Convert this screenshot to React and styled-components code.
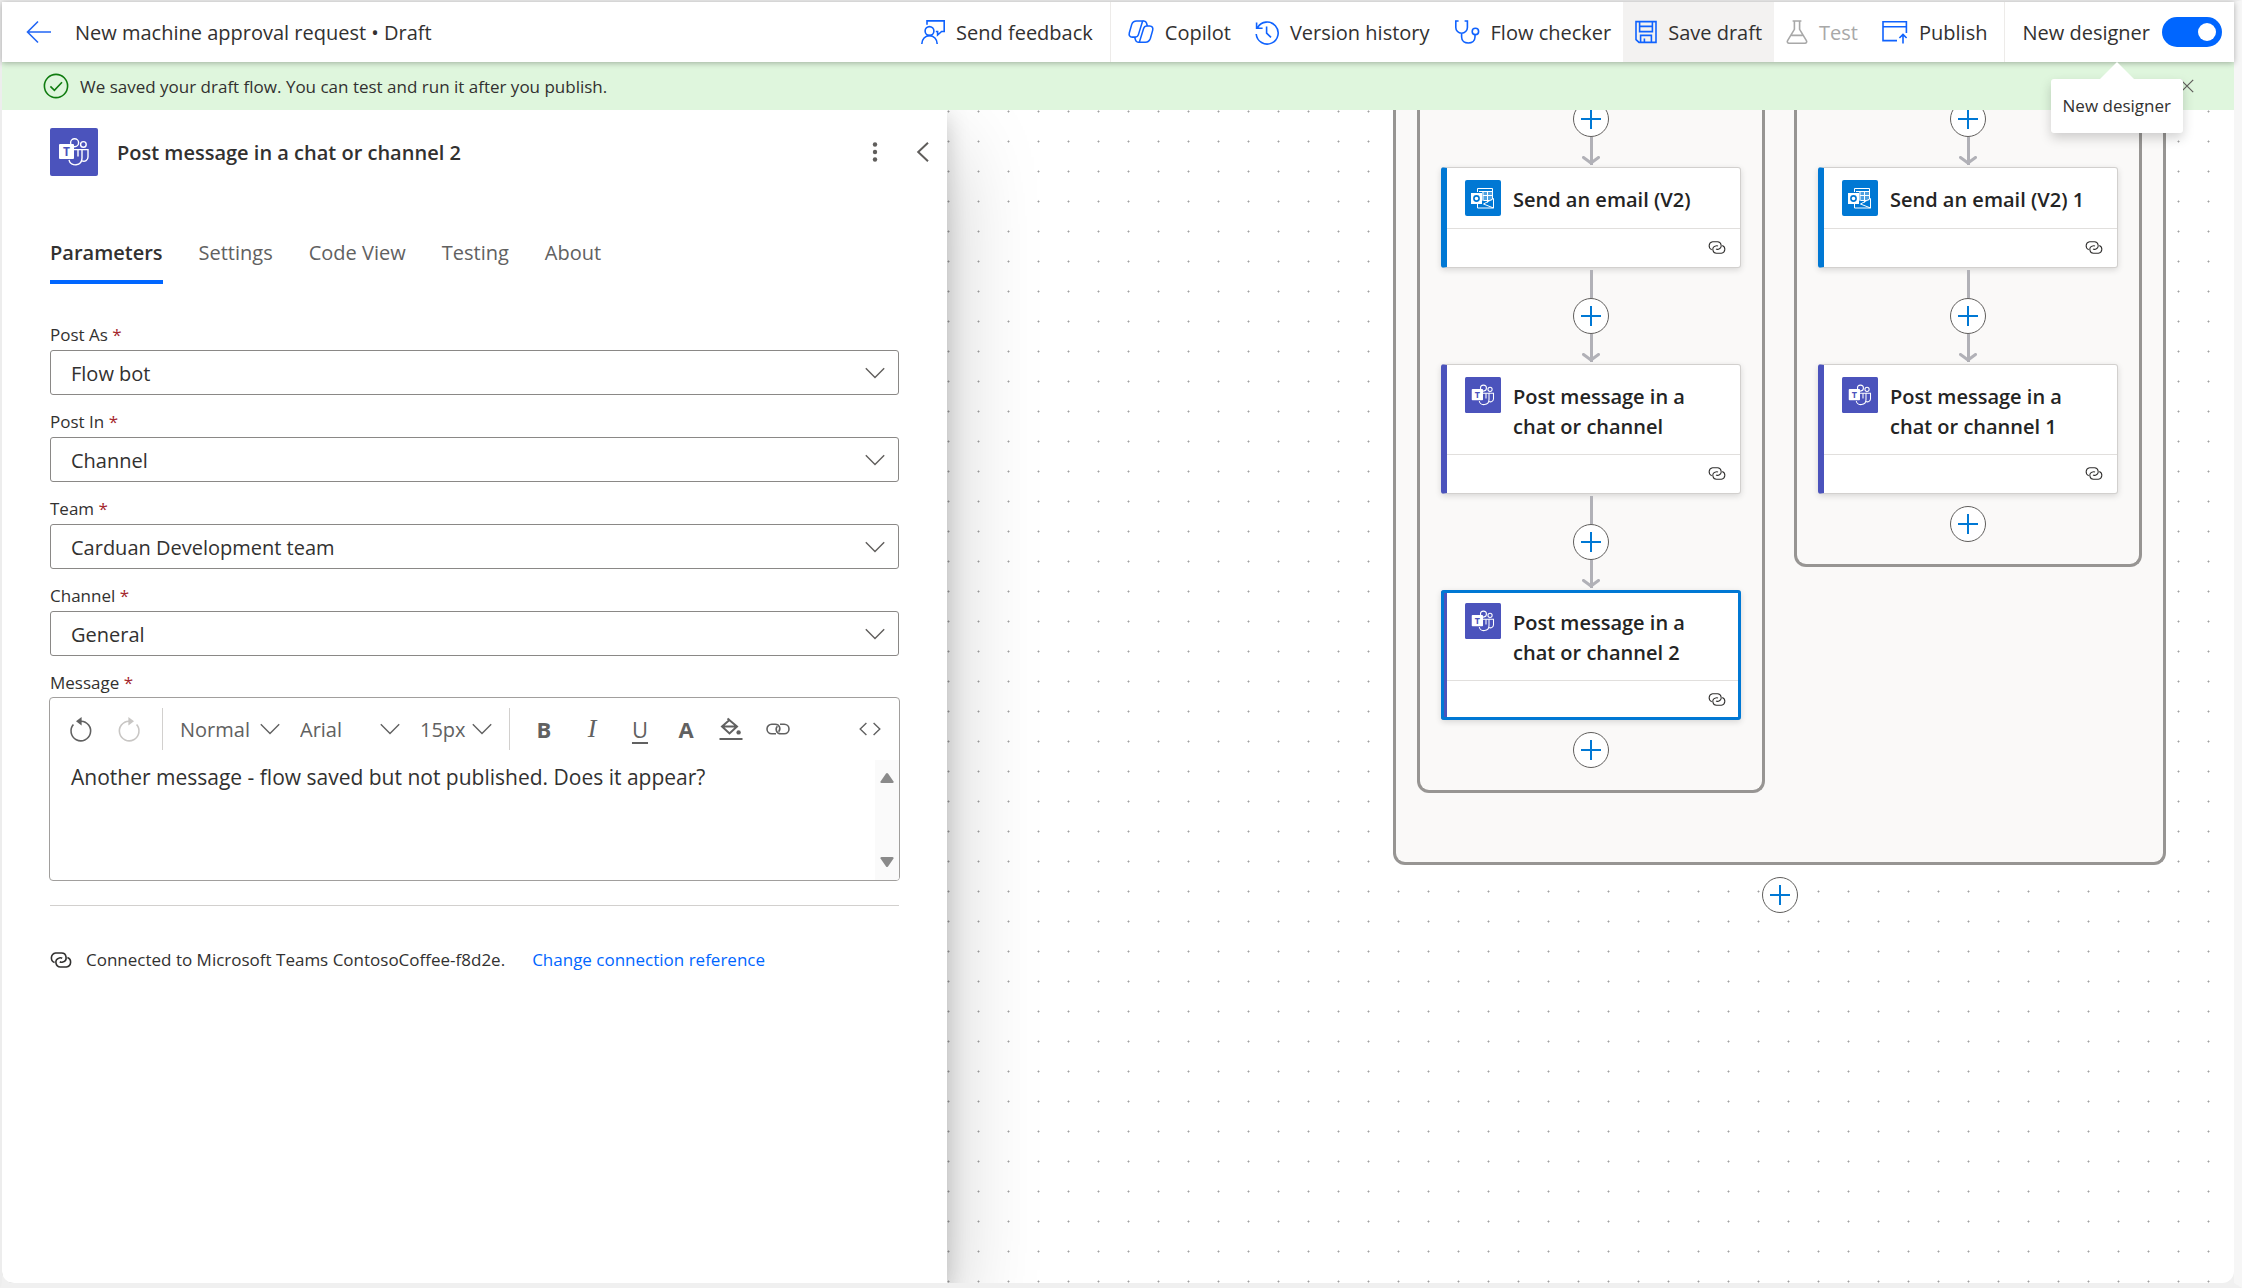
import React, { useState } from 'react';
import styled, { createGlobalStyle } from 'styled-components';

const fields = [
  { id: 'postAs', label: 'Post As', value: 'Flow bot' },
  { id: 'postIn', label: 'Post In', value: 'Channel' },
  { id: 'team', label: 'Team', value: 'Carduan Development team' },
  { id: 'channel', label: 'Channel', value: 'General' },
];

const tabs = ['Parameters', 'Settings', 'Code View', 'Testing', 'About'];

const branches = [
  [
    { kind: 'outlook', title: 'Send an email (V2)' },
    { kind: 'teams', title: 'Post message in a chat or channel' },
    { kind: 'teams', title: 'Post message in a chat or channel 2', selected: true },
  ],
  [
    { kind: 'outlook', title: 'Send an email (V2) 1' },
    { kind: 'teams', title: 'Post message in a chat or channel 1' },
  ],
];

const kindColor = { outlook: '#0078d4', teams: '#4b53bc' };

/* ---------- icons ---------- */

const BackIcon = () => (
  <Glyph $w={26} viewBox="0 0 26 24">
    <path d="M25 12H1.5M12 1.5L1.5 12 12 22.5" />
  </Glyph>
);

const FeedbackIcon = () => (
  <Glyph $w={24} viewBox="0 0 24 24">
    <circle cx="8.5" cy="11" r="4.4" />
    <path d="M.8 24a7.7 8.4 0 0 1 15.4 0M6 4.8V.9h17.2v10.6h-2.6L16.6 15v-3.5h-1.8" />
  </Glyph>
);

const CopilotIcon = () => (
  <Glyph $w={26} viewBox="0 0 27 24">
    <path d="M9 1h6.2l-4.4 14.2c-.6 1.8-1.6 2.6-3.2 2.6H4.4c-2.6 0-3.7-2-3-4.6l2.4-8.4C4.6 2.3 6.2 1 9 1z" />
    <path d="M18 23h-6.2l4.4-14.2c.6-1.8 1.6-2.6 3.2-2.6h3.2c2.6 0 3.7 2 3 4.6l-2.4 8.4c-.8 2.5-2.4 3.8-5.2 3.8z" />
    <path d="M15.2 1h1.4c1.4 0 2.2.8 2.6 2.2l.9 3M11.8 23h-1.4c-1.4 0-2.2-.8-2.6-2.2l-.9-3" />
  </Glyph>
);

const HistoryIcon = () => (
  <Glyph $w={24} viewBox="0 0 24 24">
    <path d="M2.6 7.6A11 11 0 1 1 1.2 14M1.6 2.4v5.8h6M11.6 6.4v6.8l4.4 4.2" />
  </Glyph>
);

const CheckerIcon = () => (
  <Glyph $w={26} viewBox="0 0 26 24">
    <path d="M4.6 1H1.8v6.4a5.8 5.8 0 0 0 11.6 0V1h-2.8M7.6 13.2V17c0 8 13.4 8 13.4 0v-2" />
    <circle cx="21.4" cy="11.4" r="3.2" />
  </Glyph>
);

const SaveIcon = () => (
  <Glyph $w={22} viewBox="0 0 22 24">
    <path d="M1 1.6h20v20.8H4L1 19.6zM4.6 1.6v10h12.8v-10M4.6 6.4h12.8M5.6 22.4v-7h10.8v7M9.4 18.6v3.8" />
  </Glyph>
);

const TestIcon = () => (
  <Glyph $w={22} viewBox="0 0 22 24">
    <path d="M6.6 1h8.8M8.4 1v8.4L1.6 20.6c-.8 1.4 0 2.6 1.4 2.6h16c1.4 0 2.2-1.2 1.4-2.6L13.6 9.4V1M5.4 15.4h11.2" />
  </Glyph>
);

const PublishIcon = () => (
  <Glyph $w={26} viewBox="0 0 26 24">
    <path d="M15 20.6H1V1.8h23.4V13M1 6.8h23.4M21 23.6v-9M17.4 18L21 14.4l3.6 3.6" />
  </Glyph>
);

const CheckCircleIcon = () => (
  <Glyph $w={26} viewBox="0 0 26 26">
    <circle cx="13" cy="13" r="11.6" />
    <path d="M7.4 13.4l4 4 7.6-8.2" />
  </Glyph>
);

const CloseIcon = () => (
  <Glyph $w={14} viewBox="0 0 14 14">
    <path d="M.8.8l12.4 12.4M13.2.8L.8 13.2" strokeWidth="1.2" />
  </Glyph>
);

const ChevronDown = () => (
  <Glyph $w={20} viewBox="0 0 20 12">
    <path d="M.8 1.2L10 10.4l9.2-9.2" strokeWidth="1.4" />
  </Glyph>
);

const ConnectionIcon = ({ width, weight }) => (
  <Glyph $w={width} viewBox="0 0 22 16">
    <g strokeWidth={weight}>
      <path d="M4.6 10.6A5 5 0 0 1 5.6 1h5.6a4.600 4.600 0 0 1 1.600 9c-1.200.4-2.200.3-3-.2" />
      <path d="M17.400 5.400a5 5 0 0 1-1 9.600h-5.600a4.600 4.600 0 0 1-1.600-9c1.200-.4 2.200-.3 3 .2" />
    </g>
  </Glyph>
);

const PlusIcon = () => (
  <Glyph $w={22} viewBox="0 0 22 22">
    <path d="M11 1v20M1 11h20" strokeWidth="2" />
  </Glyph>
);

const TeamsLogo = ({ size }) => (
  <Logo $size={size} viewBox="0 0 48 48">
    <rect width="48" height="48" rx="2" fill="#4b53bc" />
    <g fill="none" stroke="#fff" strokeWidth="1.4">
      <circle cx="24.6" cy="14.8" r="4" />
      <circle cx="33.4" cy="16.4" r="2.8" />
      <path d="M24 21.6h8v8.4c0 8.4-11.4 9-13 2" />
      <path d="M32 21.6h6v7.4c0 3.2-3 5-6.2 3.8M28 21.6v7" />
    </g>
    <rect x="9" y="16" width="15" height="15" rx="1" fill="#fff" />
    <text x="16.5" y="28" textAnchor="middle" fontFamily="Open Sans, sans-serif" fontSize="12" fontWeight="700" fill="#4b53bc">T</text>
  </Logo>
);

const OutlookLogo = ({ size }) => (
  <Logo $size={size} viewBox="0 0 36 36">
    <rect width="36" height="36" rx="2" fill="#0078d4" />
    <rect x="17" y="12" width="10" height="9" fill="#fff" opacity=".3" />
    <g fill="none" stroke="#fff" strokeWidth="1">
      <path d="M12.5 12V8.500h15V19M14 11.500h13.500M18 15.500h9.500M18 11.500v9M22.500 11.500v11" />
      <path d="M12.500 24v4h16V18.500l-10 5.500 10 4M18.500 20.500h6" />
    </g>
    <rect x="6" y="13" width="11" height="11" fill="#fff" />
    <circle cx="11.5" cy="18.5" r="2.6" fill="none" stroke="#0078d4" strokeWidth="1.6" />
  </Logo>
);

/* ---------- canvas ---------- */

function Connector({ first })
{
  return (
    <Edge $first={first}>
      <Line />
      <AddButton aria-label="Insert a new step"><PlusIcon /></AddButton>
      <Line />
      <ArrowHead viewBox="0 0 18 9">
        <path d="M1.5 1.5L9 7l7.5-5.5" />
      </ArrowHead>
    </Edge>
  );
}

function Step({ kind, title, selected })
{
  return (
    <Card $color={kindColor[kind]} $selected={selected}>
      <CardHead>
        {kind === 'teams' ? <TeamsLogo size={36} /> : <OutlookLogo size={36} />}
        <CardTitle>{title}</CardTitle>
      </CardHead>
      <CardFoot><ConnectionIcon width={18} weight={1.3} /></CardFoot>
    </Card>
  );
}

function Branch({ steps })
{
  return (
    <BranchFrame>
      {steps.map((step, i) => (
        <React.Fragment key={step.title}>
          <Connector first={i === 0} />
          <Step {...step} />
        </React.Fragment>
      ))}
      <AddButton $last aria-label="Insert a new step"><PlusIcon /></AddButton>
    </BranchFrame>
  );
}

/* ---------- details panel ---------- */

function MessageEditor()
{
  return (
    <Editor>
      <EditorBar>
        <Tool aria-label="Undo" $w={24}>
          <Glyph $w={22} viewBox="0 0 22 24">
            <path d="M3.4 7.6A9.8 9.8 0 1 0 11 4.2" />
            <path d="M11.6 0v8.4L6 4.2z" fill="currentColor" stroke="none" />
          </Glyph>
        </Tool>
        <Tool aria-label="Redo" $w={24} disabled>
          <Glyph $w={22} viewBox="0 0 22 24">
            <path d="M18.6 7.6A9.8 9.8 0 1 1 11 4.2" />
            <path d="M10.4 0v8.4L16 4.2z" fill="currentColor" stroke="none" />
          </Glyph>
        </Tool>
        <BarRule />
        <Picker $w={100}>
          <select aria-label="Block style"><option>Normal</option></select>
          <ChevronDown />
        </Picker>
        <Picker $w={100}>
          <select aria-label="Font"><option>Arial</option></select>
          <ChevronDown />
        </Picker>
        <Picker $w={72}>
          <select aria-label="Font size"><option>15px</option></select>
          <ChevronDown />
        </Picker>
        <BarRule />
        <Formats>
          <Tool aria-label="Bold" $w={24}><b>B</b></Tool>
          <Tool aria-label="Italic" $w={24}><i>I</i></Tool>
          <Tool aria-label="Underline" $w={24}><u>U</u></Tool>
          <Tool aria-label="Text color" $w={20}><b>A</b></Tool>
          <Tool aria-label="Background color" $w={22}>
            <Glyph $w={24} viewBox="0 0 24 24">
              <path d="M8.5 1.5l9.5 8-7.5 7L3 9.5l8-7M3.5 9.5H17" strokeWidth="2" />
              <circle cx="19.6" cy="15.4" r="2.2" fill="currentColor" stroke="none" />
              <path d="M.5 22h23" strokeWidth="2" />
            </Glyph>
          </Tool>
          <Tool aria-label="Link" $w={24}>
            <Glyph $w={24} viewBox="0 0 24 12">
              <path d="M10 10.8H5.8a4.8 4.8 0 0 1 0-9.6h3.4c4.6 0 5.8 5 3.4 7.6M14 1.2h4.2a4.8 4.8 0 0 1 0 9.600h-3.400c-4.600 0-5.800-5-3.400-7.600" />
            </Glyph>
          </Tool>
        </Formats>
        <Tool aria-label="Code view" $w={24}>
          <Glyph $w={22} viewBox="0 0 22 14">
            <path d="M7.4 1L1.2 7l6.2 6M14.6 1l6.2 6-6.2 6" strokeWidth="1.4" />
          </Glyph>
        </Tool>
      </EditorBar>
      <EditorBody>
        <MessageText
          id="message"
          spellCheck="false"
          defaultValue="Another message - flow saved but not published. Does it appear?"
        />
        <ScrollTrack aria-hidden="true">
          <svg width="16" height="12" viewBox="0 0 16 12"><path d="M7 1.5L1.5 9.5q-.5 1.5 1 1.5h11q1.5 0 1-1.5L9 1.5q-1-1-2 0z" /></svg>
          <svg width="16" height="12" viewBox="0 0 16 12"><path d="M7 10.5L1.5 2.5q-.5-1.5 1-1.5h11q1.5 0 1 1.5L9 10.5q-1 1-2 0z" /></svg>
        </ScrollTrack>
      </EditorBody>
    </Editor>
  );
}

function DetailsPanel()
{
  const [active, setActive] = useState('Parameters');

  return (
    <Panel>
      <PanelHead>
        <TeamsLogo size={48} />
        <PanelTitle>Post message in a chat or channel 2</PanelTitle>
        <PanelButton aria-label="More commands">
          <Glyph $w={6} viewBox="0 0 6 20">
            <g fill="currentColor" stroke="none">
              <circle cx="3" cy="2.5" r="2.2" />
              <circle cx="3" cy="10" r="2.2" />
              <circle cx="3" cy="17.5" r="2.2" />
            </g>
          </Glyph>
        </PanelButton>
        <PanelButton aria-label="Collapse">
          <Glyph $w={12} viewBox="0 0 12 20">
            <path d="M11 .8L1.2 10 11 19.2" strokeWidth="2" />
          </Glyph>
        </PanelButton>
      </PanelHead>

      <TabList role="tablist">
        {tabs.map(tab => (
          <Tab key={tab} role="tab" aria-selected={tab === active} $active={tab === active} onClick={() => setActive(tab)}>
            {tab}
          </Tab>
        ))}
      </TabList>

      {fields.map(field => (
        <Field key={field.id}>
          <Label htmlFor={field.id}>{field.label} <span>*</span></Label>
          <SelectBox>
            <select id={field.id}><option>{field.value}</option></select>
            <ChevronDown />
          </SelectBox>
        </Field>
      ))}

      <Field>
        <Label htmlFor="message">Message <span>*</span></Label>
        <MessageEditor />
      </Field>

      <Connection>
        <ConnectionIcon width={22} weight={1.6} />
        <span>Connected to Microsoft Teams ContosoCoffee-f8d2e.</span>
        <a href="#connection">Change connection reference</a>
      </Connection>
    </Panel>
  );
}

/* ---------- page ---------- */

function App()
{
  return (
    <>
      <GlobalStyle />
      <Shell>
        <TopBar>
          <BackLink href="#back" aria-label="Back"><BackIcon /></BackLink>
          <FlowName>New machine approval request • Draft</FlowName>
          <Command><FeedbackIcon />Send feedback</Command>
          <Rule />
          <Command><CopilotIcon />Copilot</Command>
          <Command><HistoryIcon />Version history</Command>
          <Command><CheckerIcon />Flow checker</Command>
          <Command $hover><SaveIcon />Save draft</Command>
          <Command disabled><TestIcon />Test</Command>
          <Command><PublishIcon />Publish</Command>
          <Rule />
          <Designer>
            <label htmlFor="designer">New designer</label>
            <Switch id="designer" type="checkbox" role="switch" defaultChecked />
            <Tooltip role="tooltip">New designer</Tooltip>
          </Designer>
        </TopBar>

        <Banner>
          <CheckCircleIcon />
          <span>We saved your draft flow. You can test and run it after you publish.</span>
          <Dismiss aria-label="Dismiss"><CloseIcon /></Dismiss>
        </Banner>

        <Workspace>
          <DetailsPanel />
          <Canvas>
            <Graph>
              <ScopeFrame>
                {branches.map((steps, i) => <Branch key={i} steps={steps} />)}
              </ScopeFrame>
              <AddButton $last aria-label="Insert a new step"><PlusIcon /></AddButton>
            </Graph>
          </Canvas>
        </Workspace>
      </Shell>
    </>
  );
}

export default App;

const GlobalStyle = createGlobalStyle`
    * {
        box-sizing: border-box;
    }

    body {
        margin: 0;
        background: #f5f5f5;
        color: #323130;
        font-family: 'Open Sans', 'Noto Sans', sans-serif;
        font-size: 20px;
    }

    button, select, textarea {
        font: inherit;
        color: inherit;
        border: 0;
        padding: 0;
        background: none;
    }
`

const Glyph = styled.svg`
    flex: none;
    width: ${props => props.$w}px;
    fill: none;
    stroke: currentColor;
    stroke-width: 1.6;
    overflow: visible;
`

const Logo = styled.svg`
    flex: none;
    width: ${props => props.$size}px;
    height: ${props => props.$size}px;
`

const Shell = styled.div`
    display: flex;
    flex-direction: column;
    height: 100vh;
    border: solid #ededed;
    border-width: 2px 8px 5px 2px;
    border-right-color: #f6f6f6;
    border-bottom-color: #f0f0f0;
    background: #f0f0f0;
`

const TopBar = styled.header`
    position: relative;
    z-index: 3;
    display: flex;
    align-items: center;
    flex: none;
    height: 60px;
    padding-right: 12px;
    background: #fff;
    box-shadow: 0 1px 6px rgba(0, 0, 0, 0.3);
`

const BackLink = styled.a`
    display: flex;
    padding: 0 23px 0 24px;
    color: #2266f5;
`

const FlowName = styled.h1`
    flex: 1;
    margin: 0;
    font-size: 20px;
    font-weight: 400;
    white-space: nowrap;
`

const Command = styled.button`
    display: flex;
    align-items: center;
    gap: 11px;
    height: 60px;
    padding: 0 12px;
    white-space: nowrap;
    background: ${props => props.$hover ? '#f3f2f1' : 'none'};

    svg {
        color: #0f62fe;
    }

    &:disabled, &:disabled svg {
        color: #a8a8a8;
    }
`

const Rule = styled.span`
    width: 1px;
    height: 60px;
    margin: 0 5px;
    background: #edebe9;
`

const Designer = styled.div`
    position: relative;
    display: flex;
    align-items: center;
    gap: 12px;
    padding-left: 12px;
    white-space: nowrap;
`

const Switch = styled.input`
    appearance: none;
    display: flex;
    align-items: center;
    justify-content: flex-end;
    width: 60px;
    height: 30px;
    margin: 0;
    padding: 0 6px;
    border-radius: 15px;
    background: #0066ff;

    &::before {
        content: '';
        width: 18px;
        height: 18px;
        border-radius: 50%;
        background: #fff;
    }

    &:not(:checked) {
        justify-content: flex-start;
        background: #8a8886;
    }
`

const Tooltip = styled.div`
    position: absolute;
    top: 62px;
    right: 39px;
    padding: 14px 12px;
    border-radius: 3px;
    background: #fff;
    box-shadow: 0 5px 12px rgba(0, 0, 0, 0.18);
    font-size: 17px;
    line-height: 26px;

    &::before {
        content: '';
        position: absolute;
        top: -17px;
        left: 50%;
        margin-left: -17px;
        border: solid transparent;
        border-width: 0 17px 17px;
        border-bottom-color: #fff;
    }
`

const Banner = styled.div`
    display: flex;
    align-items: center;
    gap: 11px;
    flex: none;
    height: 48px;
    padding: 0 40px 0 41px;
    background: #dff6dd;
    font-size: 17px;

    > svg {
        color: #107c10;
    }
`

const Dismiss = styled.button`
    display: flex;
    margin-left: auto;
    color: #605e5c;
`

const Workspace = styled.main`
    display: flex;
    flex: 1;
    min-height: 0;
    overflow: hidden;
    border-radius: 0 0 12px 12px;
`

const Panel = styled.section`
    position: relative;
    z-index: 1;
    flex: none;
    width: 945px;
    padding: 18px 48px 0;
    background: #fff;
    box-shadow: 0 38px 86px rgba(0, 0, 0, 0.22), 0 7px 22px rgba(0, 0, 0, 0.18);
`

const PanelHead = styled.div`
    display: flex;
    align-items: center;
    height: 48px;
    margin-right: -48px;
`

const PanelTitle = styled.h2`
    flex: 1;
    margin: 0 0 0 19px;
    font-size: 20px;
    font-weight: 600;
`

const PanelButton = styled.button`
    display: flex;
    align-items: center;
    justify-content: center;
    width: 48px;
    height: 48px;
    color: #605e5c;
`

const TabList = styled.div`
    display: flex;
    gap: 36px;
    margin: 46px 0 36px;
`

const Tab = styled.button`
    height: 62px;
    padding-top: 2px;
    border-bottom: 4px solid ${props => props.$active ? '#0066ff' : 'transparent'};
    color: ${props => props.$active ? '#323130' : '#616161'};
    font-weight: ${props => props.$active ? 600 : 400};
`

const Field = styled.div`
    margin-bottom: 12px;
`

const Label = styled.label`
    display: block;
    height: 30px;
    font-size: 17px;
    line-height: 30px;

    span {
        color: #a4262c;
    }
`

const SelectBox = styled.div`
    display: flex;
    align-items: center;
    height: 45px;
    border: 1px solid #8a8886;
    border-radius: 3px;

    select {
        flex: 1;
        appearance: none;
        height: 43px;
        padding: 2px 0 0 20px;
        margin-right: -34px;
    }

    svg {
        margin-right: 13px;
        pointer-events: none;
        color: #605e5c;
    }
`

const Editor = styled.div`
    margin: -1px -1px 0;
    border: 1px solid #a19f9d;
    border-radius: 4px;
    overflow: hidden;
`

const EditorBar = styled.div`
    display: flex;
    align-items: center;
    gap: 20px;
    height: 62px;
    padding: 0 13px 0 19px;
    color: #616161;
`

const Tool = styled.button`
    display: flex;
    align-items: center;
    justify-content: center;
    flex: none;
    width: ${props => props.$w}px;
    height: 42px;
    margin-right: 4px;
    font-size: 22px;

    &:disabled {
        color: #c8c6c4;
    }

    i {
        font-family: 'Liberation Serif', serif;
        font-size: 26px;
    }

    u {
        text-underline-offset: 4px;
    }
`

const BarRule = styled.span`
    flex: none;
    width: 1px;
    height: 42px;
    margin: 0 -3px;
    background: #d2d0ce;
`

const Picker = styled.div`
    display: flex;
    align-items: center;
    flex: none;
    width: ${props => props.$w}px;

    select {
        flex: 1;
        min-width: 0;
        appearance: none;
    }

    svg {
        pointer-events: none;
    }
`

const Formats = styled.div`
    display: flex;
    flex: 1;
    gap: 20px;
    margin-left: 5px;
`

const EditorBody = styled.div`
    display: flex;
    height: 120px;
`

const MessageText = styled.textarea`
    flex: 1;
    padding: 0 0 0 21px;
    resize: none;
    overflow: hidden;
    font-size: 21px;
    line-height: 34px;
    outline: none;
`

const ScrollTrack = styled.div`
    display: flex;
    flex-direction: column;
    justify-content: space-between;
    align-items: center;
    width: 24px;
    padding: 12px 0;
    background: #fafafa;

    svg {
        fill: #8a8a8a;
    }
`

const Connection = styled.div`
    display: flex;
    align-items: center;
    margin-top: 24px;
    padding-top: 40px;
    border-top: 1px solid #d2d0ce;
    font-size: 17px;
    line-height: 28px;

    svg {
        margin-right: 14px;
    }

    a {
        margin-left: 27px;
        color: #0066ff;
        text-decoration: none;
    }
`

const Canvas = styled.section`
    display: flex;
    flex: 1;
    justify-content: flex-end;
    align-items: flex-start;
    overflow: hidden;
    padding-right: 68px;
    background: radial-gradient(circle at 5% 5%, #a0a0a0 0.6px, transparent 1.4px) 0 0 / 30px 30px #fff;
`

const Graph = styled.div`
    display: flex;
    flex-direction: column;
    align-items: center;
`

const ScopeFrame = styled.div`
    display: flex;
    align-items: flex-start;
    gap: 29px;
    padding: 0 21px 69px;
    border: 3px solid #979593;
    border-top: 0;
    border-radius: 0 0 12px 12px;
    background: #faf9f8;
`

const BranchFrame = styled.div`
    display: flex;
    flex-direction: column;
    align-items: center;
    padding: 0 21px;
    padding-bottom: 22px;
    border: 3px solid #979593;
    border-top: 0;
    border-radius: 0 0 12px 12px;
`

const Edge = styled.div`
    display: flex;
    flex-direction: column;
    align-items: center;
    height: 96px;
    margin-top: ${props => props.$first ? '-39px' : '0'};
    padding: 2px 0;
`

const Line = styled.span`
    flex: 1;
    width: 3px;
    background: #b1b1b7;
`

const ArrowHead = styled.svg`
    width: 18px;
    height: 9px;
    margin-top: -9px;
    fill: none;
    stroke: #b1b1b7;
    stroke-width: 3;
    stroke-linecap: round;
    stroke-linejoin: round;
`

const AddButton = styled.button`
    display: flex;
    align-items: center;
    justify-content: center;
    flex: none;
    width: 36px;
    height: 36px;
    margin-top: ${props => props.$last ? '12px' : '0'};
    border: 1px solid #605e5c;
    border-radius: 50%;
    background: #fff;
    color: #0078d4;
`

const Card = styled.article`
    width: 300px;
    border: 1px solid #d2d0ce;
    border-left: 6px solid ${props => props.$color};
    border-radius: 3px;
    background: #fff;
    box-shadow: 0 2px 6px rgba(0, 0, 0, 0.14);
    outline: ${props => props.$selected ? '3px solid #0078d4' : 'none'};
    outline-offset: -3px;
`

const CardHead = styled.div`
    display: flex;
    gap: 12px;
    padding: 12px 30px 12px 18px;
    border-bottom: 1px solid #e1dfdd;
`

const CardTitle = styled.h3`
    margin: 5px 0 0;
    color: #242424;
    font-size: 20px;
    font-weight: 600;
    line-height: 30px;
`

const CardFoot = styled.div`
    display: flex;
    justify-content: flex-end;
    align-items: center;
    height: 38px;
    padding-right: 14px;
`
